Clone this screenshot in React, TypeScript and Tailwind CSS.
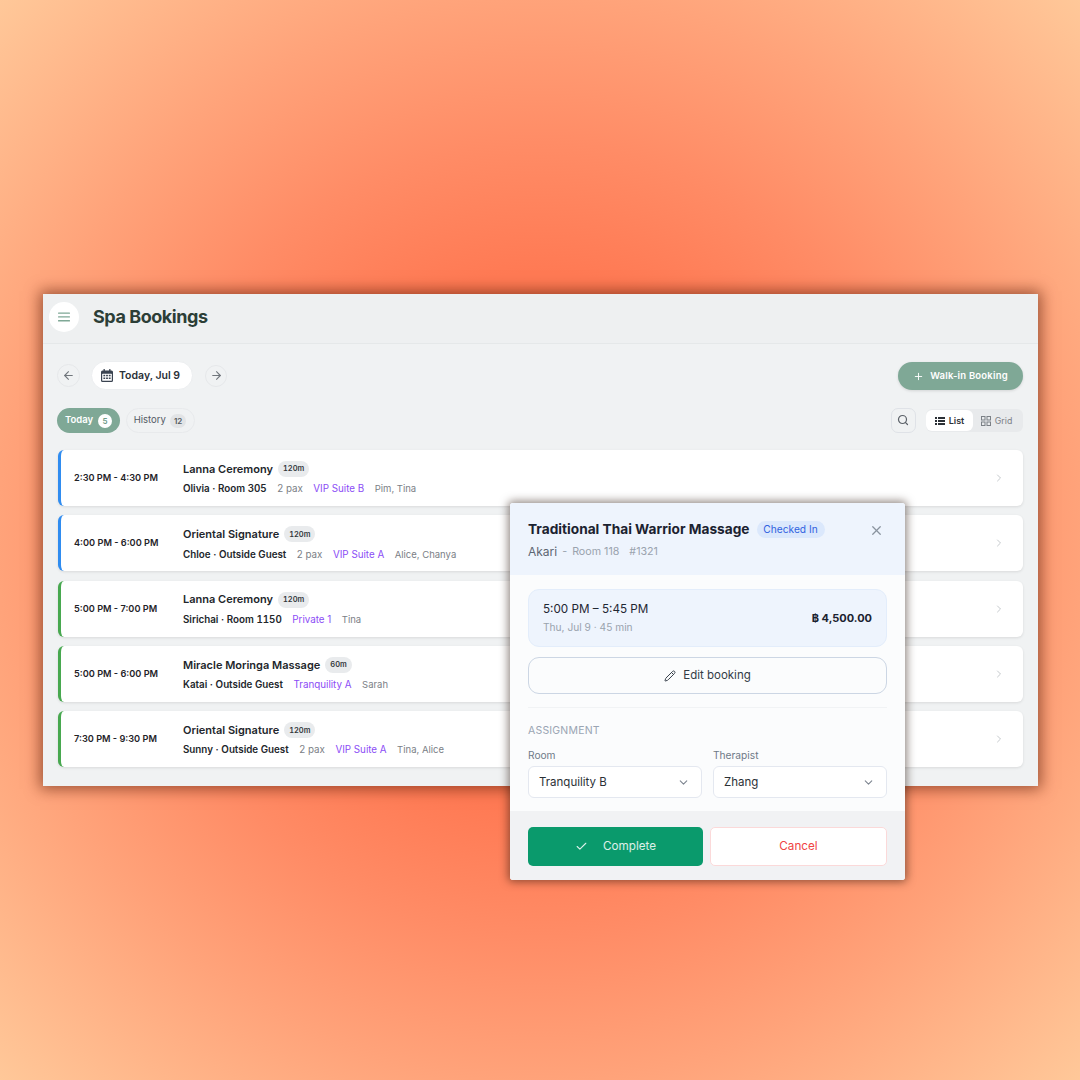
import React from 'react';
import { ArrowLeft, ArrowRight, Check, ChevronDown, ChevronRight, Pencil, Plus, Search, X } from 'lucide-react';

const bookings = [
  { time: '2:30 PM - 4:30 PM', title: 'Lanna Ceremony', mins: '120m', guest: 'Olivia · Room 305', pax: '2 pax', room: 'VIP Suite B', staff: 'Pim, Tina', bar: 'border-l-[#2f8cf0]' },
  { time: '4:00 PM - 6:00 PM', title: 'Oriental Signature', mins: '120m', guest: 'Chloe · Outside Guest', pax: '2 pax', room: 'VIP Suite A', staff: 'Alice, Chanya', bar: 'border-l-[#2f8cf0]' },
  { time: '5:00 PM - 7:00 PM', title: 'Lanna Ceremony', mins: '120m', guest: 'Sirichai · Room 1150', pax: '', room: 'Private 1', staff: 'Tina', bar: 'border-l-[#47a84f]' },
  { time: '5:00 PM - 6:00 PM', title: 'Miracle Moringa Massage', mins: '60m', guest: 'Katai · Outside Guest', pax: '', room: 'Tranquility A', staff: 'Sarah', bar: 'border-l-[#47a84f]' },
  { time: '7:30 PM - 9:30 PM', title: 'Oriental Signature', mins: '120m', guest: 'Sunny · Outside Guest', pax: '2 pax', room: 'VIP Suite A', staff: 'Tina, Alice', bar: 'border-l-[#47a84f]' },
];

const MenuIcon = () => (
  <svg width="12" height="10" viewBox="0 0 12 10" className="text-[#7fa896]" fill="currentColor">
    <rect x="0" y="0.5" width="12" height="1.3" rx="0.5" />
    <rect x="0" y="4.3" width="12" height="1.3" rx="0.5" />
    <rect x="0" y="8.1" width="12" height="1.3" rx="0.5" />
  </svg>
);

const CalendarIcon = () => (
  <svg width="12" height="13" viewBox="0 0 12 13" className="text-[#3a4350]" fill="currentColor">
    <rect x="2.5" y="0" width="1.4" height="3" rx="0.6" />
    <rect x="8.1" y="0" width="1.4" height="3" rx="0.6" />
    <path d="M1.5 1.5h9A1.5 1.5 0 0 1 12 3v8.5a1.5 1.5 0 0 1-1.5 1.5h-9A1.5 1.5 0 0 1 0 11.5V3a1.5 1.5 0 0 1 1.5-1.5z" />
    <rect x="1.2" y="4.7" width="9.6" height="7.1" rx="0.5" fill="#ffffff" />
    <rect x="2.4" y="5.8" width="1.8" height="1.5" />
    <rect x="5.1" y="5.8" width="1.8" height="1.5" />
    <rect x="7.8" y="5.8" width="1.8" height="1.5" />
    <rect x="2.4" y="8.5" width="1.8" height="1.5" />
    <rect x="5.1" y="8.5" width="1.8" height="1.5" />
    <rect x="7.8" y="8.5" width="1.8" height="1.5" />
  </svg>
);

const ListIcon = () => (
  <svg width="10" height="8" viewBox="0 0 10 8" className="text-[#2b3036]" fill="currentColor">
    <rect x="0" y="0" width="2" height="2" />
    <rect x="3" y="0" width="7" height="2" />
    <rect x="0" y="3" width="2" height="2" />
    <rect x="3" y="3" width="7" height="2" />
    <rect x="0" y="6" width="2" height="2" />
    <rect x="3" y="6" width="7" height="2" />
  </svg>
);

const GridIcon = () => (
  <svg width="10" height="10" viewBox="0 0 10 10" className="text-[#7b8086]" fill="none" stroke="currentColor" strokeWidth="1">
    <rect x="0.5" y="0.5" width="3.5" height="3.5" />
    <rect x="6" y="0.5" width="3.5" height="3.5" />
    <rect x="0.5" y="6" width="3.5" height="3.5" />
    <rect x="6" y="6" width="3.5" height="3.5" />
  </svg>
);

const BookingRow = ({ b }: { b: (typeof bookings)[number] }) => (
  <div className={`flex items-center h-[56px] rounded-[6px] bg-white border-l-[3px] shadow-[0_1px_3px_rgba(0,0,0,0.1)] ${b.bar}`}>
    <div className="w-[122px] pl-[13px] text-[9.2px] font-semibold text-[#1f2328] shrink-0">{b.time}</div>
    <div className="flex-1 flex flex-col gap-[4px] pt-[1px]">
      <div className="flex items-center gap-[5px]">
        <span className="text-[11px] font-semibold text-[#22262b]">{b.title}</span>
        <span className="h-[16px] px-[5px] rounded-full bg-[#e9ebed] text-[7.5px] font-semibold tabular-nums text-[#33373b] flex items-center">{b.mins}</span>
      </div>
      <div className="flex items-baseline gap-[10.5px] text-[9.8px] leading-[15px]">
        <span className="font-semibold tabular-nums text-[#22262b]">{b.guest}</span>
        {b.pax && <span className="text-[#7b8086]">{b.pax}</span>}
        <span className="text-[#8b4cf6]">{b.room}</span>
        <span className="text-[9.5px] text-[#7b8086]">{b.staff}</span>
      </div>
    </div>
    <ChevronRight className="w-[12px] h-[12px] text-[#c6cacd] mr-[18px]" />
  </div>
);

const Field = ({ label, value }: { label: string; value: string }) => (
  <div className="flex-1 flex flex-col gap-[3px]">
    <span className="text-[10.2px] text-[#6f7a88]">{label}</span>
    <div className="h-[32px] rounded-[6px] bg-white border border-[#e4e8f0] flex items-center justify-between pl-[10px] pr-[11px]">
      <span className="text-[11.5px] pt-[1px] text-[#2b3036]">{value}</span>
      <ChevronDown className="w-[13px] h-[13px] text-[#7d8590]" />
    </div>
  </div>
);

export default function App() {
  return (
    <div className="relative w-[1080px] h-[1080px] overflow-hidden pl-[43px] pt-[294px] font-['Inter',sans-serif] bg-[radial-gradient(circle_at_50%_50%,#ff7850_0%,#ff7a54_35%,#ff8c66_52%,#ffa37a_71%,#ffc899_100%)]">
      <div className="w-[995px] h-[492px] bg-[#f0f2f3] shadow-[0_0_14px_3px_rgba(90,30,10,0.6)]">
        <header className="h-[50px] border-b border-[#e5e8e9] flex items-center pl-[6px] pb-[4px] gap-[14px] bg-[#eef0f1]">
          <button className="w-[30px] h-[30px] rounded-full bg-white flex items-center justify-center">
            <MenuIcon />
          </button>
          <h1 className="text-[18px] font-bold tracking-[-0.45px] text-[#2c3e37]">Spa Bookings</h1>
        </header>
        <div className="pl-[14px] pr-[15px] pt-[17px]">
          <div className="flex items-center h-[29px]">
            <button className="w-[23px] h-[23px] rounded-full border border-[#e6e8ea] flex items-center justify-center">
              <ArrowLeft className="w-[13px] h-[13px] text-[#70767c]" />
            </button>
            <div className="ml-[11px] h-[29px] w-[102px] rounded-full bg-white border border-[#eceef0] flex items-center pl-[9px] gap-[6px]">
              <CalendarIcon />
              <span className="text-[10.5px] font-semibold text-[#2a3038]">Today, Jul 9</span>
            </div>
            <button className="ml-[12px] w-[22px] h-[22px] rounded-full border border-[#e6e8ea] flex items-center justify-center">
              <ArrowRight className="w-[13px] h-[13px] text-[#70767c]" />
            </button>
            <button className="ml-auto h-[28px] w-[125px] rounded-full bg-[#7fa896] text-white flex items-center justify-center gap-[6px] pt-[1px] shadow-[0_1px_3px_rgba(0,0,0,0.12)]">
              <Plus className="w-[11px] h-[11px]" />
              <span className="text-[9.5px] font-semibold tracking-[0.2px]">Walk-in Booking</span>
            </button>
          </div>
          <div className="flex items-center mt-[18px] h-[25px]">
            <div className="h-[25px] w-[63px] rounded-full bg-[#7fa896] text-white flex items-center justify-center gap-[5px]">
              <span className="text-[9.5px] font-semibold">Today</span>
              <span className="w-[14px] h-[14px] rounded-full bg-white text-[#6f9a87] text-[8px] font-semibold flex items-center justify-center">5</span>
            </div>
            <div className="ml-[6px] h-[25px] w-[69px] rounded-full border border-[#e8eaec] flex items-center justify-center gap-[4px] pr-[1px]">
              <span className="text-[9.5px] text-[#525a64]">History</span>
              <span className="h-[14px] px-[4px] rounded-full bg-[#e2e4e6] text-[#565c62] text-[8px] font-semibold flex items-center">12</span>
            </div>
            <button className="ml-auto w-[25px] h-[25px] rounded-[7px] border border-[#dfe2e7] flex items-center justify-center pr-[2px] pb-[1px]">
              <Search className="w-[12px] h-[12px] text-[#5b6168]" strokeWidth={2.4} />
            </button>
            <div className="ml-[10px] h-[23px] w-[97px] rounded-[6px] bg-[#e8eaec] flex items-center">
              <div className="h-[21px] w-[47px] rounded-[6px] bg-white flex items-center justify-center gap-[4px]">
                <ListIcon />
                <span className="text-[9px] font-semibold text-[#2b3036]">List</span>
              </div>
              <div className="flex-1 flex items-center justify-center gap-[4px] pr-[3px]">
                <GridIcon />
                <span className="text-[8.8px] text-[#7b8086]">Grid</span>
              </div>
            </div>
          </div>
          <div className="flex flex-col gap-[9.3px] mt-[17px] ml-[1px]">
            {bookings.map((b) => (
              <BookingRow key={b.time + b.title} b={b} />
            ))}
          </div>
        </div>
      </div>

      <div className="absolute left-[510px] top-[503px] w-[395px] h-[377px] rounded-[3px] bg-[#fbfcfd] overflow-hidden flex flex-col shadow-[0_0_8px_2px_rgba(40,20,10,0.5)]">
        <div className="h-[72px] bg-[#eef4fd] px-[18px] pt-[16px] relative">
          <div className="flex items-center gap-[7px]">
            <span className="text-[13.7px] font-bold text-[#1b2230]">Traditional Thai Warrior Massage</span>
            <span className="h-[17px] w-[68px] justify-center rounded-full bg-[#dbe8fc] text-[#2f62e0] text-[10.2px] flex items-center">Checked In</span>
          </div>
          <div className="flex items-center mt-[3px] text-[10.7px] text-[#9aa3ae]">
            <span className="text-[12px] text-[#5d6672]">Akari</span>
            <span className="ml-[5px]">-</span>
            <span className="ml-[5px]">Room 118</span>
            <span className="ml-[10px]">#1321</span>
          </div>
          <X className="absolute right-[21px] top-[20px] w-[15px] h-[15px] text-[#8a939e]" />
        </div>
        <div className="flex-1 px-[18px] pt-[14px]">
          <div className="h-[58px] rounded-[11px] bg-[#eef4fd] border border-[#e3edfb] flex items-center justify-between pl-[14px] pr-[14px]">
            <div className="flex flex-col gap-[2px]">
              <span className="text-[11.7px] text-[#1f2733]">5:00 PM – 5:45 PM</span>
              <span className="text-[10.2px] text-[#9aa3ae]">Thu, Jul 9 · 45 min</span>
            </div>
            <span className="text-[11px] font-bold text-[#1b2230]">฿ 4,500.00</span>
          </div>
          <button className="mt-[10px] w-full h-[37px] rounded-[11px] border border-[#ccd6e4] flex items-center justify-center gap-[7px] pt-[1px]">
            <Pencil className="w-[12px] h-[12px] text-[#3a424d]" />
            <span className="text-[11.5px] text-[#333b46]">Edit booking</span>
          </button>
          <div className="border-t border-[#f1f3f5] mt-[13px] pt-[15px]">
            <div className="text-[10.5px] text-[#9aa5b3] tracking-[0.2px]">ASSIGNMENT</div>
            <div className="flex gap-[11px] mt-[9px]">
              <Field label="Room" value="Tranquility B" />
              <Field label="Therapist" value="Zhang" />
            </div>
          </div>
        </div>
        <div className="h-[69px] bg-[#f1f2f4] px-[18px] pt-[1px] flex items-center gap-[7px]">
          <button className="w-[175px] h-[39px] rounded-[5px] bg-[#0a9a6c] text-white/85 flex items-center justify-center gap-[15px]">
            <Check className="w-[13px] h-[13px]" />
            <span className="text-[11.7px] pt-[1px]">Complete</span>
          </button>
          <button className="flex-1 h-[39px] rounded-[5px] bg-white border border-[#fbd9d9] text-[#ef4444] text-[11.7px] pt-[1px]">Cancel</button>
        </div>
      </div>
    </div>
  );
}
